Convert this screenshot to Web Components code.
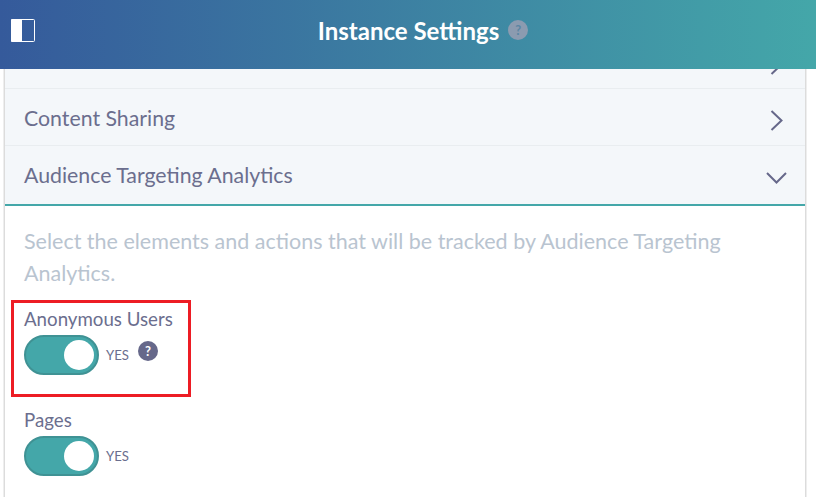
<!DOCTYPE html>
<html>
<head>
<meta charset="utf-8">
<title>Instance Settings</title>
<style>
html, body { margin: 0; height: 100%; overflow: hidden; background: #fff; }
body { font-family: "Lato", "Noto Sans", sans-serif; }
</style>
</head>
<body>
<settings-page>
  <accordion-row class="cut" state="closed"></accordion-row>
  <accordion-row state="closed">Content Sharing</accordion-row>
  <accordion-row state="open">Audience Targeting Analytics</accordion-row>
  <p-text>Select the elements and actions that will be tracked by Audience Targeting Analytics.</p-text>
  <toggle-field label="Anonymous Users" help marked></toggle-field>
  <toggle-field label="Pages"></toggle-field>
</settings-page>

<script>
"use strict"

class SettingsPage extends HTMLElement{
    constructor(){
        super();
        this.attachShadow({mode: "open"});
        this.shadowRoot.innerHTML = `
        <style>
        :host{
            display: flex;
            flex-direction: column;
            height: 497px;
            overflow: hidden;
        }
        .bar{
            flex: none;
            box-sizing: border-box;
            height: 69px;
            padding: 0 0 9px 30px;
            display: flex;
            align-items: center;
            justify-content: center;
            position: relative;
            background: linear-gradient(90deg, #355a9b 0%, #44a7a9 100%);
            color: #fff;
            font-size: 24px;
            font-weight: 700;
        }
        .toggle{
            position: absolute;
            left: 11px;
            top: 19px;
            width: 24px;
            height: 23px;
        }
        .help{
            width: 20px;
            height: 20px;
            margin-left: 9px;
            border-radius: 50%;
            background: #8b9bb0;
            color: #5b86a3;
            font-size: 13px;
            font-weight: 700;
            line-height: 20px;
            text-align: center;
        }
        .panel{
            flex: 1;
            margin: 0 10px 0 4px;
            border-left: 1px solid #dcdcdc;
            border-right: 1px solid #dcdcdc;
            box-shadow: -1px 0 0 #eee, 1px 0 0 #eee;
        }
        </style>
        <div class="bar">
            <svg class="toggle" viewBox="0 0 24 23">
                <rect x="0.5" y="0.5" width="23" height="22" rx="1" fill="none" stroke="#fff"/>
                <rect x="0" y="0" width="11" height="23" rx="1" fill="#fff"/>
            </svg>
            <span>Instance Settings</span>
            <span class="help">?</span>
        </div>
        <div class="panel"><slot></slot></div>
        `;
    }
}

class AccordionRow extends HTMLElement{
    constructor(){
        super();
        this.attachShadow({mode: "open"});
        const open = this.getAttribute("state") === "open";
        const chevron = open
            ? `<path d="M1 1l9.5 9.5L20 1"/>`
            : `<path d="M5.5 1l10 9.500-10 9.500"/>`;
        this.shadowRoot.innerHTML = `
        <style>
        :host{
            display: flex;
            align-items: center;
            justify-content: space-between;
            box-sizing: border-box;
            height: 57px;
            padding: 0 18px 0 19px;
            background: #f4f7fa;
            border-bottom: 1px solid #e9edf0;
            color: #6b6e8e;
            font-size: 21.3px;
        }
        :host([state="closed"]) span{
            margin-top: 2px;
        }
        :host([state="open"]){
            height: 60px;
            border-bottom: 2px solid #44a7a9;
        }
        :host(.cut){
            height: 20px;
            align-items: flex-end;
        }
        :host(.cut) svg{
            margin: 0 0 13px;
        }
        svg{
            flex: none;
            width: 21px;
            height: 21px;
            margin-top: 6px;
            fill: none;
            stroke: #66688a;
            stroke-width: 2;
        }
        :host([state="open"]) svg{
            margin-top: 14px;
        }
        </style>
        <span><slot></slot></span>
        <svg viewBox="0 0 21 21">${chevron}</svg>
        `;
    }
}

class PText extends HTMLElement{
    constructor(){
        super();
        this.attachShadow({mode: "open"});
        this.shadowRoot.innerHTML = `
        <style>
        :host{
            display: block;
            padding: 19px 60px 0 19px;
            color: #b9c4d0;
            font-size: 21.5px;
            line-height: 32px;
        }
        </style>
        <slot></slot>
        `;
    }
}

class ToggleField extends HTMLElement{
    constructor(){
        super();
        this.attachShadow({mode: "open"});
        const help = this.hasAttribute("help") ? `<span class="help">?</span>` : "";
        const mark = this.hasAttribute("marked") ? `<div class="mark"></div>` : "";
        this.shadowRoot.innerHTML = `
        <style>
        :host{
            display: block;
            position: relative;
            padding: 0 0 0 19px;
            margin-top: 18px;
            height: 79px;
            color: #6b6e8e;
        }
        :host([marked]){
            margin-top: 19px;
            height: 83px;
        }
        .label{
            font-size: 18.700px;
            line-height: 22px;
        }
        .line{
            display: flex;
            align-items: center;
            margin-top: 5px;
        }
        .track{
            box-sizing: border-box;
            width: 75px;
            height: 40px;
            padding: 3px;
            border: 2px solid #3f9294;
            border-radius: 20px;
            background: #44a7a9;
            display: flex;
            justify-content: flex-end;
        }
        .knob{
            width: 30px;
            height: 30px;
            border-radius: 50%;
            background: #fff;
        }
        .state{
            margin-left: 7px;
            font-size: 13.200px;
        }
        .help{
            width: 20px;
            height: 20px;
            margin: -8px 0 0 9px;
            border-radius: 50%;
            background: #66688a;
            color: #fff;
            font-size: 13px;
            font-weight: 700;
            line-height: 20px;
            text-align: center;
        }
        .mark{
            position: absolute;
            left: 6px;
            top: -8px;
            width: 174px;
            height: 91px;
            border: 3px solid #ed1c24;
        }
        </style>
        <div class="label">${this.getAttribute("label")}</div>
        <div class="line">
            <div class="track"><div class="knob"></div></div>
            <span class="state">YES</span>
            ${help}
        </div>
        ${mark}
        `;
    }
}

customElements.define("settings-page", SettingsPage);
customElements.define("accordion-row", AccordionRow);
customElements.define("p-text", PText);
customElements.define("toggle-field", ToggleField);
</script>
</body>
</html>
